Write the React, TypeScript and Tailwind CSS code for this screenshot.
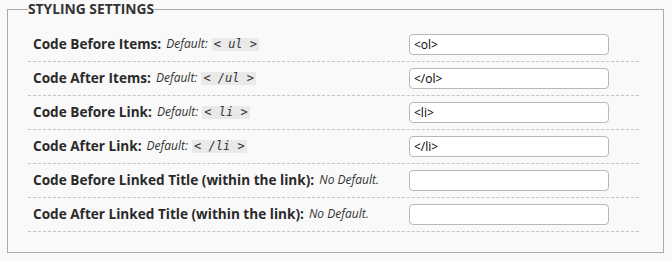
const rows: { label: string; def?: string; value: string }[] = [
  { label: "Code Before Items:", def: "< ul >", value: "<ol>" },
  { label: "Code After Items:", def: "< /ul >", value: "</ol>" },
  { label: "Code Before Link:", def: "< li >", value: "<li>" },
  { label: "Code After Link:", def: "< /li >", value: "</li>" },
  { label: "Code Before Linked Title (within the link):", value: "" },
  { label: "Code After Linked Title (within the link):", value: "" },
];

export default function App() {
  return (
    <div className="h-[261px] w-[672px] bg-[#f9f9f9] pl-[7px] pr-[8px] font-['Open_Sans',sans-serif] text-[#333]">
      <fieldset className="h-[253px] border border-[#aaa] pb-[20px] pl-[20px] pr-[24px] pt-[10px]">
        <legend className="text-[13.8px] font-bold uppercase leading-[18px] text-[#333]">
          Styling Settings
        </legend>
        {rows.map((row) => (
          <div
            key={row.label}
            className="flex h-[34px] items-center border-b border-dashed border-[#c4c4c4]"
          >
            <div className="flex w-[381px] items-center pl-[5px]">
              <span className="text-[13.6px] font-bold text-[#2a2a2a]">{row.label}</span>
              {row.def ? (
                <>
                  <span className="ml-[5px] text-[12px] italic">Default:</span>
                  <code className="ml-[4px] bg-[#e9e9e9] px-[2px] font-['DejaVu_Sans_Mono',monospace] text-[12px] italic leading-[13px]">
                    {row.def}
                  </code>
                </>
              ) : (
                <span className="ml-[5px] text-[12px] italic">No Default.</span>
              )}
            </div>
            <input
              type="text"
              defaultValue={row.value}
              className="h-[21px] w-[200px] rounded-[4px] border border-[#b8b8b8] bg-white px-[4px] text-[12px] text-black outline-none"
            />
          </div>
        ))}
      </fieldset>
    </div>
  );
}
